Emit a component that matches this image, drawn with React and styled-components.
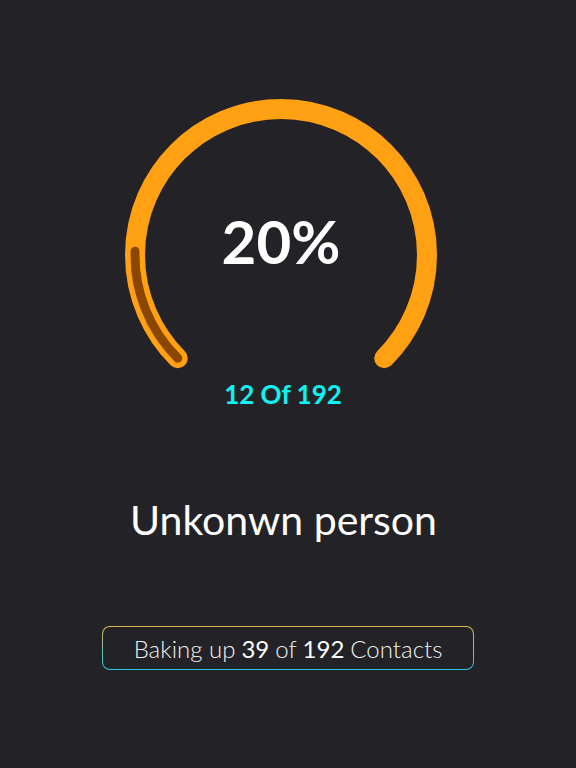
import React from "react";
import styled, { createGlobalStyle } from "styled-components";

const GlobalStyle = createGlobalStyle`
  html, body {
    margin: 0;
    padding: 0;
    background: #232327;
    font-family: Lato, "Open Sans", sans-serif;
  }
`;

const Page = styled.div`
  display: flex;
  flex-direction: column;
  align-items: center;
  min-height: 768px;
  padding-top: 99px;
  box-sizing: border-box;
`;

const Gauge = styled.div`
  position: relative;
  width: 320px;
  height: 270px;
  margin-left: -14px;
`;

const Percent = styled.div`
  position: absolute;
  left: 0;
  right: 0;
  top: 106px;
  text-align: center;
  color: #ffffff;
  font-size: 60px;
  font-weight: 700;
  line-height: 72px;
`;

const Count = styled.div`
  margin-top: 9px;
  margin-left: -10px;
  color: #0cf4f4;
  font-size: 26px;
  font-weight: 700;
  line-height: 32px;
`;

const Name = styled.div`
  margin-top: 85px;
  margin-left: -9px;
  color: #ffffff;
  font-size: 41px;
  font-weight: 400;
  line-height: 50px;
`;

const Status = styled.div`
  margin-top: 81px;
  width: 372px;
  height: 44px;
  box-sizing: border-box;
  border: 1.5px solid transparent;
  border-radius: 8px;
  background:
    linear-gradient(#232327, #232327) padding-box,
    linear-gradient(180deg, #dcb552 0%, #7fbf9a 50%, #1fc6e6 100%) border-box;
  display: flex;
  align-items: center;
  justify-content: center;
  color: #f0f0f0;
  font-size: 24px;
  font-weight: 300;
`;

const Num = styled.b`
  font-weight: 400;
  color: #ffffff;
  margin: 0 6px;
`;

const CX = 160;
const CY = 156;
const R = 146;

function point(deg) {
  const a = (deg * Math.PI) / 180;
  return [CX + R * Math.cos(a), CY + R * Math.sin(a)];
}

function arc(from, to) {
  const [x1, y1] = point(from);
  const [x2, y2] = point(to);
  const large = to - from > 180 ? 1 : 0;
  return `M ${x1} ${y1} A ${R} ${R} 0 ${large} 1 ${x2} ${y2}`;
}

function Ring({ sweep }) {
  return (
    <svg width="320" height="270" viewBox="0 0 320 270">
      <path
        d={arc(135, 405)}
        fill="none"
        stroke="#ffa112"
        strokeWidth="20"
        strokeLinecap="round"
      />
      <path
        d={arc(135, 135 + sweep)}
        fill="none"
        stroke="#8b4700"
        strokeWidth="9"
        strokeLinecap="round"
      />
    </svg>
  );
}

export default function App() {
  return (
    <>
      <GlobalStyle />
      <Page>
        <Gauge>
          <Ring sweep={46.5} />
          <Percent>20%</Percent>
        </Gauge>
        <Count>12 Of 192</Count>
        <Name>Unkonwn person</Name>
        <Status>
          Baking up<Num>39</Num>of<Num>192</Num>Contacts
        </Status>
      </Page>
    </>
  );
}
